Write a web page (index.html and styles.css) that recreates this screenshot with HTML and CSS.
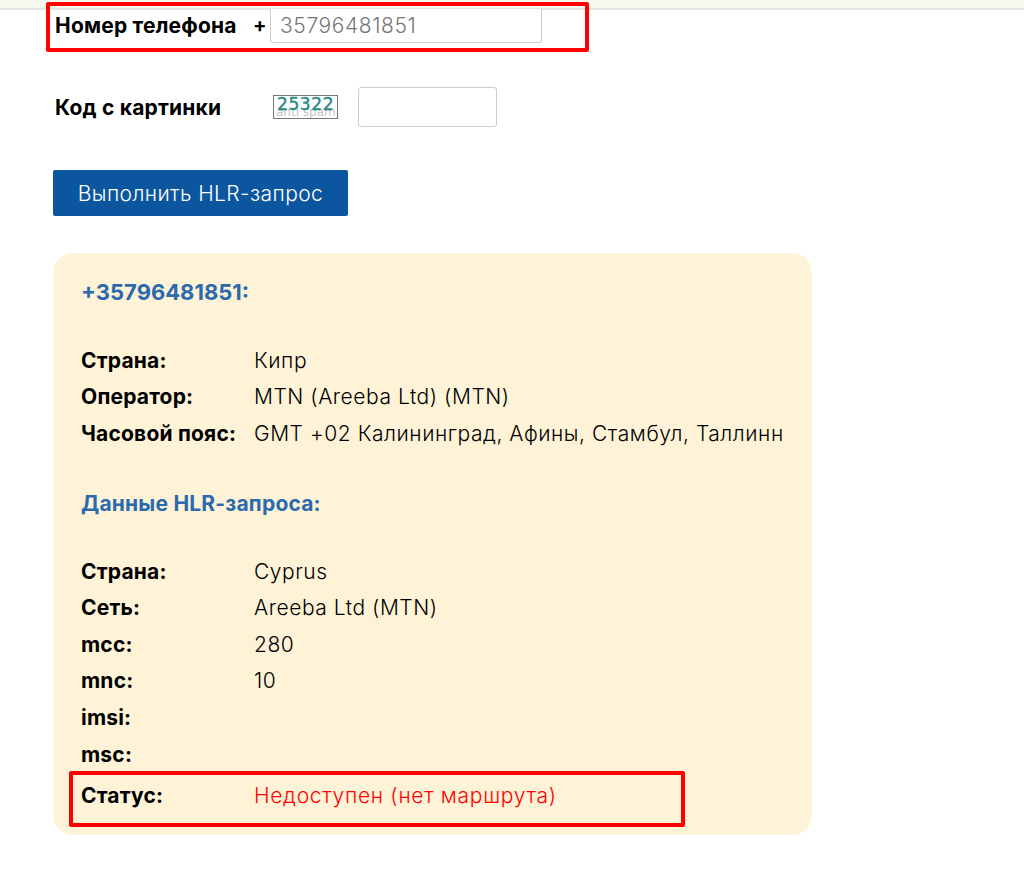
FILE: index.html
```html
<!DOCTYPE html>
<html lang="ru">
<head>
<meta charset="utf-8">
<title>HLR-запрос</title>
<link rel="stylesheet" href="styles.css">
</head>
<body>
<div class="topline"></div>
<main class="page">
  <form class="form">
    <div class="phone-row">
      <label class="label phone-label">Номер телефона</label>
      <span class="plus">+</span>
      <input class="input phone-input" type="text" value="35796481851">
    </div>
    <div class="captcha-row">
      <label class="label captcha-label">Код с картинки</label>
      <div class="captcha"><span class="captcha-back">anti spam</span><span class="captcha-code">25322</span></div>
      <input class="input captcha-input" type="text">
    </div>
    <button class="submit" type="button">Выполнить HLR-запрос</button>
  </form>
  <section class="result">
    <h2 class="heading heading-phone">+35796481851:</h2>
    <dl class="rows rows-first">
      <div class="row"><dt>Страна:</dt><dd>Кипр</dd></div>
      <div class="row"><dt>Оператор:</dt><dd>MTN (Areeba Ltd) (MTN)</dd></div>
      <div class="row"><dt>Часовой пояс:</dt><dd>GMT +02 Калининград, Афины, Стамбул, Таллинн</dd></div>
    </dl>
    <h3 class="heading heading-data">Данные HLR-запроса:</h3>
    <dl class="rows rows-second">
      <div class="row"><dt>Страна:</dt><dd>Cyprus</dd></div>
      <div class="row"><dt>Сеть:</dt><dd>Areeba Ltd (MTN)</dd></div>
      <div class="row"><dt>mcc:</dt><dd>280</dd></div>
      <div class="row"><dt>mnc:</dt><dd>10</dd></div>
      <div class="row"><dt>imsi:</dt><dd></dd></div>
      <div class="row"><dt>msc:</dt><dd></dd></div>
      <div class="row row-status"><dt>Статус:</dt><dd class="status">Недоступен (нет маршрута)</dd></div>
    </dl>
  </section>
</main>
<div class="mark mark-phone"></div>
<div class="mark mark-status"></div>
</body>
</html>
```
FILE: styles.css
```css
* { box-sizing: border-box; }
html, body { margin: 0; padding: 0; background: #fff; }
body { font-family: "Inter", "Noto Sans", sans-serif; color: #000; position: relative; height: 884px; overflow: hidden; }
.topline { height: 10px; background: #f5f8ec; border-bottom: 2px solid #e3e6df; margin-bottom: -1px; }
.page { padding: 0 0 0 53px; }
.form { display: flex; flex-direction: column; align-items: flex-start; }
.label { font-weight: 700; font-size: 21px; letter-spacing: 0.2px; white-space: nowrap; }
.phone-row { display: flex; align-items: center; height: 34px; margin-left: 2px; }
.phone-label { width: 198px; padding-bottom: 2px; }
.plus { font-weight: 700; font-size: 20px; width: 17px; padding-bottom: 2px; }
.input { border: 1px solid #ccc; border-radius: 3px; background: #fff; font-family: inherit; outline: none; padding: 0 9px; }
.phone-input { width: 272px; height: 34px; border-top: 0; font-size: 21px; font-weight: 300; color: #777; letter-spacing: 0.6px; border-radius: 0 0 3px 3px; }
.captcha-row { display: flex; align-items: center; height: 40px; margin: 44px 0 0 2px; }
.captcha-label { width: 218px; }
.captcha { position: relative; width: 65px; height: 24px; border: 1px solid #777; background: #fff; overflow: hidden; }
.captcha-code { position: absolute; top: -1px; left: 3px; font: 400 17px/18px "DejaVu Sans", sans-serif; letter-spacing: 0.6px; -webkit-text-stroke: 0.4px #2a8a84; color: #2a8a84; }
.captcha-back { position: absolute; top: 10px; left: 2px; font: 12px/13px "DejaVu Sans", sans-serif; white-space: nowrap; color: #c4c4c4; }
.captcha-input { width: 139px; height: 40px; margin-left: 20px; }
.submit { margin-top: 43px; width: 295px; height: 46px; border: 0; border-radius: 2px; background: #0c569f; color: #fff; font-family: inherit; font-size: 21px; font-weight: 300; letter-spacing: 0.4px; padding: 0; }
.result { margin-top: 37px; width: 759px; height: 582px; background: #fef3d7; border-radius: 20px; padding: 25px 0 0 28px; }
.heading { margin: 0; color: #2a6aad; font-weight: 700; font-size: 22px; line-height: 28px; }
.rows { margin: 0; display: flex; flex-direction: column; }
.rows-first { margin-top: 36px; }
.heading-data { margin-top: 38px; font-size: 21px; letter-spacing: 0.2px; }
.rows-second { margin-top: 35px; }
.row { display: flex; height: 36.6px; align-items: center; font-size: 21px; }
.row dt { width: 173px; font-weight: 700; letter-spacing: 0.2px; white-space: nowrap; }
.row dd { margin: 0; font-weight: 300; white-space: nowrap; letter-spacing: 0.55px; }
.row-status { margin-top: 5px; }
.status { color: #f00; letter-spacing: 0.7px; }
.row dd.status { letter-spacing: 0.7px; }
.mark { position: absolute; border: 4px solid #f00; border-radius: 2px; }
.mark-phone { left: 46px; top: 2px; width: 543px; height: 50px; }
.mark-status { left: 69px; top: 771px; width: 616px; height: 56px; }
```
